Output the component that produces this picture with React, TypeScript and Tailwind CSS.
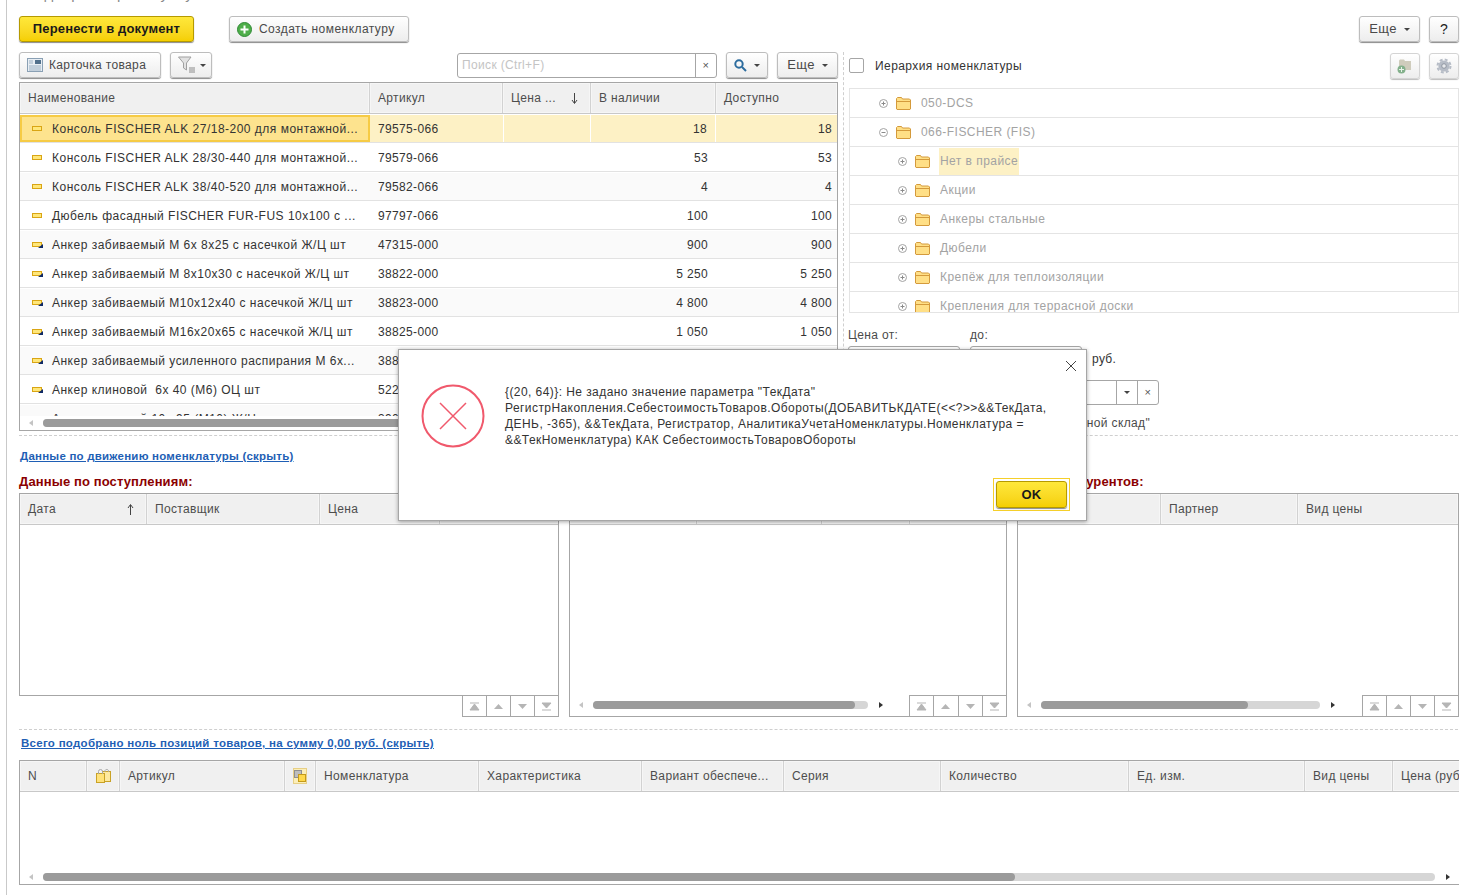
import type { ReactNode } from "react";

const btn =
  "flex items-center rounded-[3px] border border-[#bdbdbd] bg-linear-to-b from-white to-[#ededed] shadow-[0_1px_1px_#8a8a8a] text-[#4a4a4a]";

type Col = { w: string; label?: ReactNode; right?: ReactNode };

function Caret() {
  return <span className="inline-block h-0 w-0 border-x-[3px] border-t-[3px] border-x-transparent border-t-[#444]" />;
}

function Arrow({ up }: { up?: boolean }) {
  return (
    <svg width="7" height="11" viewBox="0 0 7 11" className={`mr-[4px] ${up ? "rotate-180" : ""}`}>
      <path d="M3.5 0v10M1 7l2.5 3.5L6 7" fill="none" stroke="#444" />
    </svg>
  );
}

function RowIcon({ tri }: { tri?: boolean }) {
  return (
    <svg width="12" height="8" viewBox="0 0 12 8" className="shrink-0">
      <rect x="0.5" y="1.5" width="9" height="4" fill="#ffe77a" stroke="#d9a514" />
      {tri && <path d="M11 3v4H6z" fill="#0f2a66" />}
    </svg>
  );
}

function Folder() {
  return (
    <svg width="15" height="13" viewBox="0 0 15 13" className="shrink-0">
      <path d="M.5 3V1.5l1-1h4l1 1.5h7l1 1V12l-.5.5H1l-.5-.5z" fill="#ffdf86" stroke="#d49a3c" />
      <path d="M.5 4.5h14" stroke="#d49a3c" />
    </svg>
  );
}

function Toggle({ open }: { open?: boolean }) {
  return (
    <svg width="9" height="9" viewBox="0 0 9 9" className="shrink-0">
      <circle cx="4.5" cy="4.5" r="4" fill="none" stroke="#a3a3a3" />
      <path d={open ? "M2.5 4.5h4" : "M2.5 4.5h4M4.5 2.5v4"} stroke="#8a8a8a" />
    </svg>
  );
}

function Pager({ className }: { className: string }) {
  const paths = ["M2 1h9M6.5 2L11 8H2z", "M6.5 2L11 7H2z", "M2 2h9L6.5 7z", "M2 1h9L6.5 6zM2 8h9"];
  return (
    <div className={`flex h-[21px] ${className}`}>
      {paths.map((d, i) => (
        <div key={i} className="flex w-[24px] flex-1 items-center justify-center border-l border-[#a6a6a6] first:border-l-0">
          <svg width="13" height="9" viewBox="0 0 13 9">
            <path d={d} fill="#b5b5b5" stroke={i === 0 || i === 3 ? "#b5b5b5" : "none"} strokeWidth="1" />
          </svg>
        </div>
      ))}
    </div>
  );
}

function Scroll({ track, thumb, dark, className }: { track: string; thumb: string; dark?: boolean; className?: string }) {
  return (
    <div className={`flex h-[14px] items-center ${className ?? ""}`}>
      <span className="ml-[9px] mr-[10px] h-0 w-0 border-y-[3px] border-r-[4px] border-y-transparent border-r-[#c4c4c4]" />
      <div className={`h-[8px] rounded-full bg-[#d6d6d6] ${track}`}>
        <div className={`h-[8px] rounded-full bg-[#9b9b9b] ${thumb}`} />
      </div>
      <span className={`ml-[11px] h-0 w-0 border-y-[3px] border-l-[4px] border-y-transparent ${dark ? "border-l-[#333]" : "border-l-[#c4c4c4]"}`} />
    </div>
  );
}

function Head({ cols }: { cols: Col[] }) {
  return (
    <div className="flex h-[31px] shrink-0 overflow-hidden border-b border-[#c8c8c8]">
      {cols.map((c, i) => (
        <div
          key={i}
          className={`flex h-[30px] shrink-0 items-center justify-between border-r border-[#d2d2d2] bg-[#f0f0f0] pl-[8px] pr-[8px] whitespace-nowrap text-[#4d4d4d] shadow-[inset_0_0_0_1px_#f6f6f6] ${c.w}`}
        >
          {c.label}
          {c.right}
        </div>
      ))}
    </div>
  );
}

const goods: [string, string, string, boolean][] = [
  ["Консоль FISCHER ALK 27/18-200 для монтажной...", "79575-066", "18", false],
  ["Консоль FISCHER ALK 28/30-440 для монтажной...", "79579-066", "53", false],
  ["Консоль FISCHER ALK 38/40-520 для монтажной...", "79582-066", "4", false],
  ["Дюбель фасадный FISCHER FUR-FUS 10x100 с ...", "97797-066", "100", false],
  ["Анкер забиваемый М 6x 8x25 с насечкой Ж/Ц шт", "47315-000", "900", true],
  ["Анкер забиваемый М 8x10x30 с насечкой Ж/Ц шт", "38822-000", "5 250", true],
  ["Анкер забиваемый М10x12x40 с насечкой Ж/Ц шт", "38823-000", "4 800", true],
  ["Анкер забиваемый М16x20x65 с насечкой Ж/Ц шт", "38825-000", "1 050", true],
  ["Анкер забиваемый усиленного распирания М 6x...", "388", "", true],
  ["Анкер клиновой  6x 40 (М6) ОЦ шт", "522", "", true],
  ["Анкер клиновой 10x 95 (М10) Ж/Ц шт", "390", "", true],
];

const tree: [number, string, boolean?, boolean?][] = [
  [0, "050-DCS"],
  [0, "066-FISCHER (FIS)", true],
  [1, "Нет в прайсе", false, true],
  [1, "Акции"],
  [1, "Анкеры стальные"],
  [1, "Дюбели"],
  [1, "Крепёж для теплоизоляции"],
  [1, "Крепления для террасной доски"],
];

function Bags() {
  return (
    <svg width="15" height="15" viewBox="0 0 15 15">
      <rect x="6.5" y="3.5" width="8" height="10" fill="#fde9a0" stroke="#c9a227" />
      <rect x="0.5" y="5.5" width="8" height="9" fill="#ffe27a" stroke="#c9a227" />
      <path d="M2.5 6V3.5a2 2 0 0 1 4 0V6M9 4V2.5a2 2 0 0 1 3.5 0V4" fill="none" stroke="#a8a8a8" />
    </svg>
  );
}

function Series() {
  return (
    <span className="flex h-[16px] w-[16px] items-center justify-center border border-[#e7cf85] bg-[#fbeeb8]">
      <svg width="12" height="12" viewBox="0 0 12 12">
        <rect x="0.5" y="0.5" width="7" height="7" fill="#bdbdbd" stroke="#8f8f8f" />
        <rect x="4.5" y="4.5" width="7" height="7" fill="#ffd84a" stroke="#c49a1a" />
      </svg>
    </span>
  );
}

export default function App() {
  return (
    <div className="relative h-[895px] w-[1475px] overflow-hidden bg-white font-['Liberation_Sans',Arial,sans-serif] text-[12px] tracking-[0.35px] text-[#333]">
      <div className="ml-[6px] h-[895px] border-l border-[#c9c9c9] pl-[12px]">
        <div className="flex h-[3px] items-end overflow-hidden pl-[6px] text-[15px] leading-[18px] text-[#8a8a8a]">
          Подбор товаров и услуг
        </div>

        <div className="mt-[13px] flex h-[27px] w-[1440px] items-start">
          <button className="h-[26px] w-[175px] rounded-[3px] border border-[#b59a00] bg-linear-to-b from-[#ffe83a] to-[#f5cf00] text-[13px] font-bold tracking-[0.15px] text-[#1a1a1a] shadow-[0_1px_1px_#8a8a8a]">
            Перенести в документ
          </button>
          <div className={`${btn} ml-[35px] h-[26px] w-[180px] pl-[7px]`}>
            <svg width="15" height="15" viewBox="0 0 15 15">
              <circle cx="7.5" cy="7.5" r="7" fill="#4fae4a" stroke="#2f8a35" />
              <path d="M7.5 3.5v8M3.5 7.5h8" stroke="#fff" strokeWidth="2" />
            </svg>
            <span className="ml-[7px] tracking-[0.45px]">Создать номенклатуру</span>
          </div>
          <div className={`${btn} ml-auto h-[26px] w-[61px] justify-center gap-[7px] text-[13px]`}>
            Еще <Caret />
          </div>
          <div className={`${btn} ml-[9px] h-[26px] w-[30px] justify-center text-[14px] text-[#222]`}>?</div>
        </div>

        <div className="mt-[9px] flex h-[380px] w-[1440px]">
          <div className="flex w-[819px] shrink-0 flex-col">
            <div className="flex h-[27px] shrink-0 items-start">
              <div className={`${btn} h-[26px] w-[142px] pl-[7px]`}>
                <svg width="16" height="14" viewBox="0 0 16 14">
                  <rect x="0.5" y="0.5" width="15" height="13" fill="#e8eef4" stroke="#8aa0b4" />
                  <rect x="8" y="2" width="6" height="4" fill="#51708c" />
                  <path d="M2 3h4M2 5h4M2 8h12M2 10h12M2 12h12" stroke="#9bb0c2" />
                </svg>
                <span className="ml-[6px]">Карточка товара</span>
              </div>
              <div className={`${btn} ml-[9px] h-[26px] w-[42px] pl-[7px]`}>
                <svg width="18" height="18" viewBox="0 0 18 18">
                  <path d="M.5 1h12.5L8.5 7v7L5.5 12V7z" fill="#e2e2e2" stroke="#a0a0a0" />
                  <path d="M11 12h6M11 14h6M11 16h6" stroke="#8a8a8a" />
                </svg>
                <span className="ml-[4px] flex"><Caret /></span>
              </div>
              <div className="ml-[245px] mt-[1px] flex h-[25px] w-[260px] rounded-[3px] border border-[#a6a6a6] bg-white">
                <span className="flex-1 pl-[4px] leading-[23px] text-[#c4c4c4]">Поиск (Ctrl+F)</span>
                <span className="flex w-[21px] items-center justify-center border-l border-[#a6a6a6] text-[11px] text-[#555]">×</span>
              </div>
              <div className={`${btn} ml-[9px] h-[26px] w-[42px] justify-center gap-[7px]`}>
                <svg width="13" height="13" viewBox="0 0 13 13" fill="none" stroke="#2c6c9e" strokeWidth="2">
                  <circle cx="5" cy="5" r="3.7" />
                  <path d="M8 8l4 4" />
                </svg>
                <Caret />
              </div>
              <div className={`${btn} ml-[9px] h-[26px] w-[61px] justify-center gap-[7px] text-[13px]`}>
                Еще <Caret />
              </div>
            </div>

            <div className="mt-[3px] flex h-[349px] flex-col border border-[#a6a6a6]">
              <Head
                cols={[
                  { w: "w-[350px]", label: "Наименование" },
                  { w: "w-[133px]", label: "Артикул" },
                  { w: "w-[88px]", label: "Цена ...", right: <Arrow /> },
                  { w: "w-[125px]", label: "В наличии" },
                  { w: "w-[121px] border-r-0", label: "Доступно" },
                ]}
              />
              <div className="h-[303px] overflow-hidden">
                {goods.map(([name, art, qty, tri], i) => (
                  <div key={art} className="h-[29px] border-b border-[#e2e2e2] pt-[1px]">
                    <div
                      className={`flex h-[27px] leading-[28px] ${i === 0 ? "bg-[#fdf1c5]" : i % 2 === 0 ? "bg-[#fafafa]" : "bg-white"}`}
                    >
                      <div className={`flex w-[350px] shrink-0 items-center whitespace-pre ${i === 0 ? "border-2 border-[#f6cb45] bg-[#fde38e] pl-[10px]" : "pl-[12px]"}`}>
                        <RowIcon tri={tri} />
                        <span className="ml-[8px] tracking-[0.49px]">{name}</span>
                      </div>
                      <div className="w-[133px] shrink-0 pl-[8px]">{art}</div>
                      <div className={`w-[88px] shrink-0 ${i === 0 ? "border-x border-white" : ""}`} />
                      <div className={`w-[125px] shrink-0 pr-[8px] text-right ${i === 0 ? "border-r border-white" : ""}`}>{qty}</div>
                      <div className="w-[121px] shrink-0 pr-[5px] text-right">{qty}</div>
                    </div>
                  </div>
                ))}
              </div>
              <Scroll track="w-[780px]" thumb="w-[700px]" />
            </div>
          </div>

          <div className="mx-[5px] w-0 border-l border-dashed border-[#cfcfcf]" />

          <div className="flex w-[610px] flex-col">
            <div className="flex h-[27px] shrink-0 items-center">
              <span className="h-[15px] w-[15px] rounded-[2px] border border-[#a6a6a6]" />
              <span className="ml-[11px] tracking-[0.42px] text-[#333]">Иерархия номенклатуры</span>
              <div className={`${btn} ml-auto h-[26px] w-[30px] justify-center border-[#d4d4d4] shadow-[0_1px_1px_#bcbcbc]`}>
                <svg width="18" height="18" viewBox="0 0 18 18">
                  <path d="M3 3.5l1-1h4l1 1.5h6v9H3z" fill="#cfccbc" />
                  <circle cx="5.5" cy="12.5" r="4" fill="#83b08b" />
                  <path d="M5.5 10v5M3 12.5h5" stroke="#e8f3ea" />
                </svg>
              </div>
              <div className={`${btn} ml-[9px] h-[26px] w-[30px] justify-center border-[#d4d4d4] shadow-[0_1px_1px_#bcbcbc]`}>
                <svg width="16" height="16" viewBox="0 0 16 16">
                  <circle cx="8" cy="8" r="5.6" fill="#b6bcc6" />
                  <circle cx="8" cy="8" r="6.5" fill="none" stroke="#b6bcc6" strokeWidth="2" strokeDasharray="2.9 2.2" />
                  <circle cx="8" cy="8" r="2.3" fill="#e6e8eb" stroke="#9097a2" />
                </svg>
              </div>
            </div>

            <div className="mt-[9px] h-[229px] overflow-hidden border border-[#e4e4e4]">
              {tree.map(([level, label, open, sel]) => (
                <div key={label} className="flex h-[29px] items-center border-b border-[#e4e4e4] text-[#a3a3a3]">
                  <div className={`flex items-center ${level === 0 ? "pl-[29px]" : "pl-[48px]"}`}>
                    <Toggle open={open} />
                    <span className="ml-[8px]"><Folder /></span>
                  </div>
                  <span className={`h-[27px] leading-[27px] tracking-[0.45px] ${sel ? "ml-[9px] bg-[#fdf1c5] px-[1px]" : "ml-[10px]"}`}>{label}</span>
                </div>
              ))}
            </div>

            <div className="-ml-[1px] mt-[13px] flex text-[#4a4a4a]">
              <span className="w-[122px]">Цена от:</span>
              <span>до:</span>
            </div>
            <div className="-ml-[1px] mt-[2px] flex h-[26px]">
              <div className="h-[26px] w-[112px] rounded-[3px] border border-[#a6a6a6]" />
              <div className="ml-[10px] h-[26px] w-[112px] rounded-[3px] border border-[#a6a6a6]" />
              <span className="ml-[10px] leading-[27px]">руб.</span>
            </div>
            <div className="-ml-[1px] mt-[8px] flex h-[25px] w-[311px] rounded-[3px] border border-[#a6a6a6]">
              <span className="flex-1" />
              <span className="flex w-[21px] items-center justify-center border-l border-[#a6a6a6]"><Caret /></span>
              <span className="flex w-[21px] items-center justify-center border-l border-[#a6a6a6] text-[11px] text-[#555]">×</span>
            </div>
            <div className="mt-[9px] w-[301px] text-right text-[#4a4a4a]">"Основной склад"</div>
          </div>
        </div>

        <div className="mt-[3px] w-[1439px] border-t border-dashed border-[#cfcfcf]" />
        <div className="mt-[12px] pl-[1px] text-[11.5px] font-bold tracking-[0.22px] text-[#1f5fb5] underline">
          Данные по движению номенклатуры (скрыть)
        </div>
        <div className="mt-[10px] flex h-[14px] w-[1440px] font-bold leading-[14px] tracking-[0.12px] text-[#8b0000]">
          <span className="w-[998px] text-[13px]">Данные по поступлениям:</span>
          <span className="text-[13px]">Цены конкурентов:</span>
        </div>

        <div className="mt-[4px] flex h-[224px] w-[1440px] gap-[10px]">
          <div className="flex w-[540px] shrink-0 flex-col items-end">
            <div className="h-[203px] w-full border border-[#a6a6a6]">
              <Head
                cols={[
                  { w: "w-[127px]", label: "Дата", right: <Arrow up /> },
                  { w: "w-[173px]", label: "Поставщик" },
                  { w: "w-[120px]", label: "Цена" },
                  { w: "w-[118px] border-r-0", label: "" },
                ]}
              />
            </div>
            <Pager className="w-[97px] border border-t-0 border-[#a6a6a6]" />
          </div>
          <div className="flex w-[438px] shrink-0 flex-col border border-[#a6a6a6]">
            <Head
              cols={[
                { w: "w-[127px]", label: "" },
                { w: "w-[125px]", label: "" },
                { w: "w-[88px]", label: "" },
                { w: "w-[96px] border-r-0", label: "" },
              ]}
            />
            <div className="flex-1" />
            <div className="flex items-end justify-between">
              <Scroll className="mb-[4px]" track="w-[275px]" thumb="w-[262px]" dark />
              <Pager className="w-[97px] border-t border-l border-[#a6a6a6]" />
            </div>
          </div>
          <div className="flex w-[442px] shrink-0 flex-col border border-[#a6a6a6]">
            <Head
              cols={[
                { w: "w-[143px]", label: "" },
                { w: "w-[137px]", label: "Партнер" },
                { w: "w-[160px] border-r-0", label: "Вид цены" },
              ]}
            />
            <div className="flex-1" />
            <div className="flex items-end justify-between">
              <Scroll className="mb-[4px]" track="w-[279px]" thumb="w-[207px]" dark />
              <Pager className="w-[96px] border-t border-l border-[#a6a6a6]" />
            </div>
          </div>
        </div>

        <div className="mt-[12px] w-[1439px] border-t border-dashed border-[#cfcfcf]" />
        <div className="mt-[5px] pl-[2px] text-[11.5px] font-bold tracking-[0.28px] text-[#1f5fb5] underline">
          Всего подобрано ноль позиций товаров, на сумму 0,00 руб. (скрыть)
        </div>
        <div className="mt-[7px] flex h-[125px] w-[1440px] flex-col overflow-hidden border-y border-l border-[#a6a6a6]">
          <Head
            cols={[
              { w: "w-[67px]", label: "N" },
              { w: "w-[33px] justify-center", label: <Bags /> },
              { w: "w-[165px]", label: "Артикул" },
              { w: "w-[31px] justify-center", label: <Series /> },
              { w: "w-[163px]", label: "Номенклатура" },
              { w: "w-[163px]", label: "Характеристика" },
              { w: "w-[142px]", label: "Вариант обеспече..." },
              { w: "w-[157px]", label: "Серия" },
              { w: "w-[188px]", label: "Количество" },
              { w: "w-[176px]", label: "Ед. изм." },
              { w: "w-[88px]", label: "Вид цены" },
              { w: "w-[80px] border-r-0", label: "Цена (руб.)" },
            ]}
          />
          <div className="flex-1" />
          <Scroll track="w-[1392px]" thumb="w-[972px]" dark />
        </div>
      </div>

      <div className="absolute left-[398px] top-[349px] h-[172px] w-[689px] border border-[#a6a6a6] bg-white shadow-[0_1px_4px_rgba(0,0,0,0.35)]">
        <svg width="12" height="12" viewBox="0 0 12 12" className="absolute right-[9px] top-[10px]" fill="none" stroke="#444">
          <path d="M1 1l10 10M11 1L1 11" />
        </svg>
        <svg width="64" height="64" viewBox="0 0 64 64" className="absolute left-[22px] top-[34px]" fill="none" stroke="#f0596c">
          <circle cx="32" cy="32" r="30.5" strokeWidth="2" />
          <path d="M19 19l26 26M45 19L19 45" strokeWidth="1.5" />
        </svg>
        <div className="absolute left-[106px] top-[34px] w-[570px] leading-[16px] tracking-[0.43px] text-[#333]">
          <div>{'{(20, 64)}: Не задано значение параметра "ТекДата"'}</div>
          <div>РегистрНакопления.СебестоимостьТоваров.Обороты(ДОБАВИТЬКДАТЕ({"<<?>>"}&&ТекДата,</div>
          <div>ДЕНЬ, -365), &&ТекДата, Регистратор, АналитикаУчетаНоменклатуры.Номенклатура =</div>
          <div>&&ТекНоменклатура) КАК СебестоимостьТоваровОбороты</div>
        </div>
        <div className="absolute left-[594px] top-[128px] border border-[#f5cf2a] p-[2px]">
          <button className="block h-[27px] w-[71px] rounded-[3px] border border-[#b59a00] bg-linear-to-b from-[#ffe83a] to-[#f5cf00] text-[13px] font-bold text-[#1a1a1a] shadow-[0_1px_1px_#8a8a8a]">
            OK
          </button>
        </div>
      </div>
    </div>
  );
}
